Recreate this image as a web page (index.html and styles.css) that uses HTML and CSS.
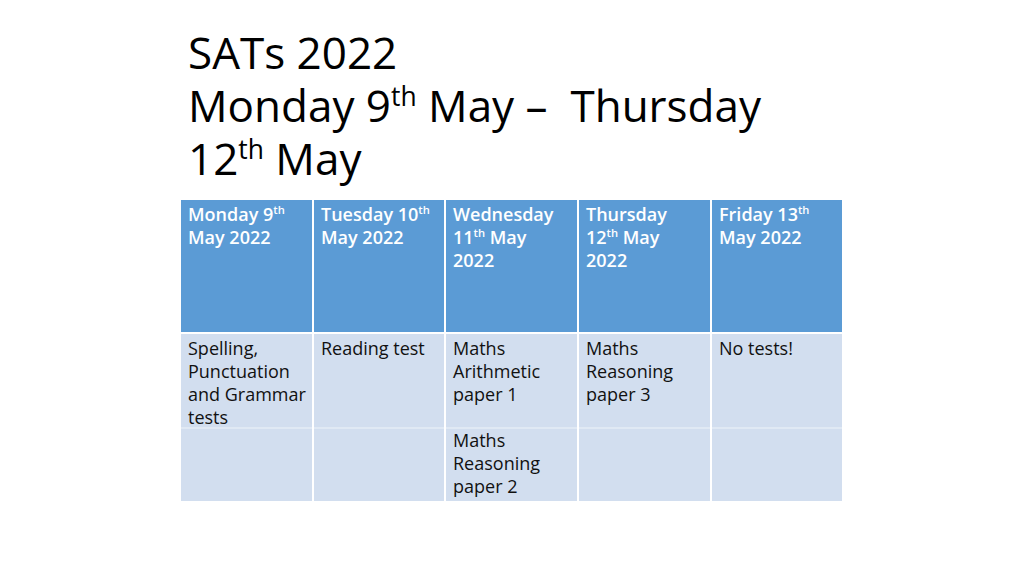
FILE: index.html
```html
<!DOCTYPE html>
<html lang="en">
<head>
<meta charset="utf-8">
<title>SATs 2022</title>
<link rel="stylesheet" href="styles.css">
</head>
<body>
<div class="slide">
  <h1 class="title">SATs 2022<br>Monday 9<sup>th</sup> May – &nbsp;Thursday<br>12<sup>th</sup> May</h1>
  <div class="grid">
    <div class="cell head">Monday 9<sup>th</sup><br>May 2022</div>
    <div class="cell head">Tuesday 10<sup>th</sup><br>May 2022</div>
    <div class="cell head">Wednesday<br>11<sup>th</sup> May<br>2022</div>
    <div class="cell head">Thursday<br>12<sup>th</sup> May<br>2022</div>
    <div class="cell head">Friday 13<sup>th</sup><br>May 2022</div>

    <div class="cell body">Spelling,<br>Punctuation<br>and Grammar<br>tests</div>
    <div class="cell body">Reading test</div>
    <div class="cell body">Maths<br>Arithmetic<br>paper 1<br><br>Maths<br>Reasoning<br>paper 2</div>
    <div class="cell body">Maths<br>Reasoning<br>paper 3</div>
    <div class="cell body">No tests!</div>
  </div>
</div>
</body>
</html>
```
FILE: styles.css
```css
html, body {
  margin: 0;
  padding: 0;
  background: #ffffff;
}

.slide {
  width: 1024px;
  height: 576px;
  padding: 26px 0 0 181px;
  box-sizing: border-box;
  font-family: "Open Sans", "DejaVu Sans", sans-serif;
}

.title {
  margin: 0 0 15px 7px;
  font-size: 44px;
  font-weight: 400;
  line-height: 53px;
  color: #000000;
}

.title sup {
  font-size: 0.6em;
  line-height: 0;
  vertical-align: 0.6em;
}

.grid {
  width: 661px;
  display: grid;
  grid-template-columns: 131px 130px 131px 131px 130px;
  grid-template-rows: 132px 167px;
  column-gap: 2px;
  row-gap: 2px;
}

.cell {
  padding: 3px 5px 0 7px;
  font-size: 18px;
  line-height: 23px;
}

.cell sup {
  font-size: 0.62em;
  line-height: 0;
  vertical-align: 0.62em;
}

.head {
  background: #5b9bd5;
  color: #ffffff;
  font-weight: 600;
}

.body {
  padding-top: 3px;
  color: #111111;
  background: linear-gradient(to bottom, #d2deef 0, #d2deef 93px, #e0e9f4 93px, #e0e9f4 95px, #d2deef 95px);
}
```
